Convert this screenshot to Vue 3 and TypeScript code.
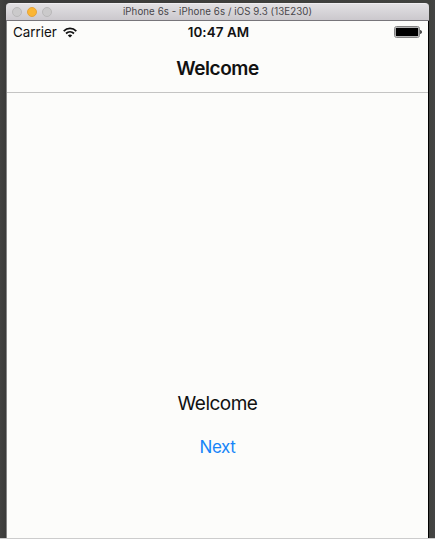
<script setup lang="ts">
const windowTitle = 'iPhone 6s - iPhone 6s / iOS 9.3 (13E230)'
const controls: string[] = ['close', 'minimize', 'zoom']
</script>

<template>
  <main class="desktop">
    <section class="window">
      <header class="titlebar">
        <div class="controls">
          <span v-for="control in controls" :key="control" class="control" :class="control"></span>
        </div>
        <span class="window-title">{{ windowTitle }}</span>
      </header>
      <div class="screen">
        <div class="status">
          <div class="carrier">
            <span>Carrier</span>
            <svg class="wifi" width="14" height="11" viewBox="0 0 14 11" fill="none" stroke="#111" stroke-width="1.75">
              <path d="M.7 4.1C4.3.5 9.7.5 13.3 4.1" />
              <path d="M3 6.5c2.3-2.2 5.7-2.2 8 0" />
              <path d="M7 10.6 4.8 8.4c1.2-1.2 3.2-1.2 4.4 0Z" fill="#111" stroke="none" />
            </svg>
          </div>
          <span class="time">10:47 AM</span>
          <svg class="battery" width="28" height="12" viewBox="0 0 28 12">
            <rect x=".6" y=".6" width="24.8" height="10.8" rx="1.8" fill="#fff" stroke="#777" />
            <rect x="1.7" y="1.7" width="22.6" height="8.6" rx=".7" fill="#000" />
            <path d="M26.2 4c2.2.4 2.2 3.6 0 4Z" fill="#222" />
          </svg>
        </div>
        <nav class="navbar"><h1>Welcome</h1></nav>
        <div class="content">
          <p class="label">Welcome</p>
          <button class="next" type="button">Next</button>
        </div>
      </div>
    </section>
  </main>
</template>

<style>
body {
  margin: 0;
  overflow: hidden;
}
</style>

<style scoped>
.desktop {
  box-sizing: border-box;
  width: 435px;
  height: 539px;
  padding: 3px 6px 0;
  background: linear-gradient(90deg, #424240, #3b3b3a 6px, #41423f 429px, #444);
  border-bottom: 1px solid #ccc;
  font-family: Inter, "Liberation Sans", sans-serif;
  color: #111;
}
.window {
  display: flex;
  flex-direction: column;
  width: 423px;
  height: 535px;
}
.titlebar {
  box-sizing: border-box;
  display: grid;
  grid-template-columns: 58px 1fr 58px;
  align-items: center;
  height: 18px;
  border-radius: 4px 4px 0 0;
  border-top: 1px solid #efedf0;
  border-bottom: 1px solid #77757a;
  background: linear-gradient(#e2e0e3, #cbc8cd);
}
.controls {
  display: flex;
  gap: 5px;
  padding-left: 6px;
}
.control {
  box-sizing: border-box;
  width: 10px;
  height: 10px;
  border: 1px solid #b9b8b9;
  border-radius: 50%;
  background: #cbcacb;
}
.minimize {
  background: #fbb634;
  border-color: #e5a33b;
}
.window-title {
  justify-self: center;
  font-size: 9.7px;
  line-height: 16px;
  letter-spacing: 0.08px;
  white-space: nowrap;
  color: #48464a;
}
.screen {
  box-sizing: border-box;
  flex: 1;
  display: flex;
  flex-direction: column;
  border-left: 1px solid #858585;
  border-right: 1px solid #000;
  background: #fcfcfa;
}
.status {
  display: grid;
  grid-template-columns: 1fr auto 1fr;
  align-items: center;
  height: 22px;
  padding: 0 6px;
  font-size: 13.4px;
}
.carrier {
  display: flex;
  align-items: center;
  gap: 6px;
}
.time {
  padding-left: 2px;
  font-weight: 600;
  font-size: 13.4px;
  letter-spacing: 0.1px;
}
.battery {
  justify-self: end;
}
.navbar {
  box-sizing: border-box;
  display: flex;
  align-items: center;
  justify-content: center;
  height: 50px;
  padding-top: 2px;
  border-bottom: 1px solid #c4c4c3;
}
h1 {
  margin: 0;
  font-size: 19px;
  line-height: 24px;
  font-weight: 600;
  letter-spacing: -0.42px;
}
.content {
  display: flex;
  flex-direction: column;
  align-items: center;
  padding-top: 299px;
}
.label {
  margin: 0;
  font-size: 19px;
  line-height: 24px;
  letter-spacing: -0.5px;
}
.next {
  margin-top: 19px;
  padding: 0;
  border: 0;
  background: none;
  font: 17px/24px Inter, "Liberation Sans", sans-serif;
  letter-spacing: -0.4px;
  color: #1685f8;
}
</style>
